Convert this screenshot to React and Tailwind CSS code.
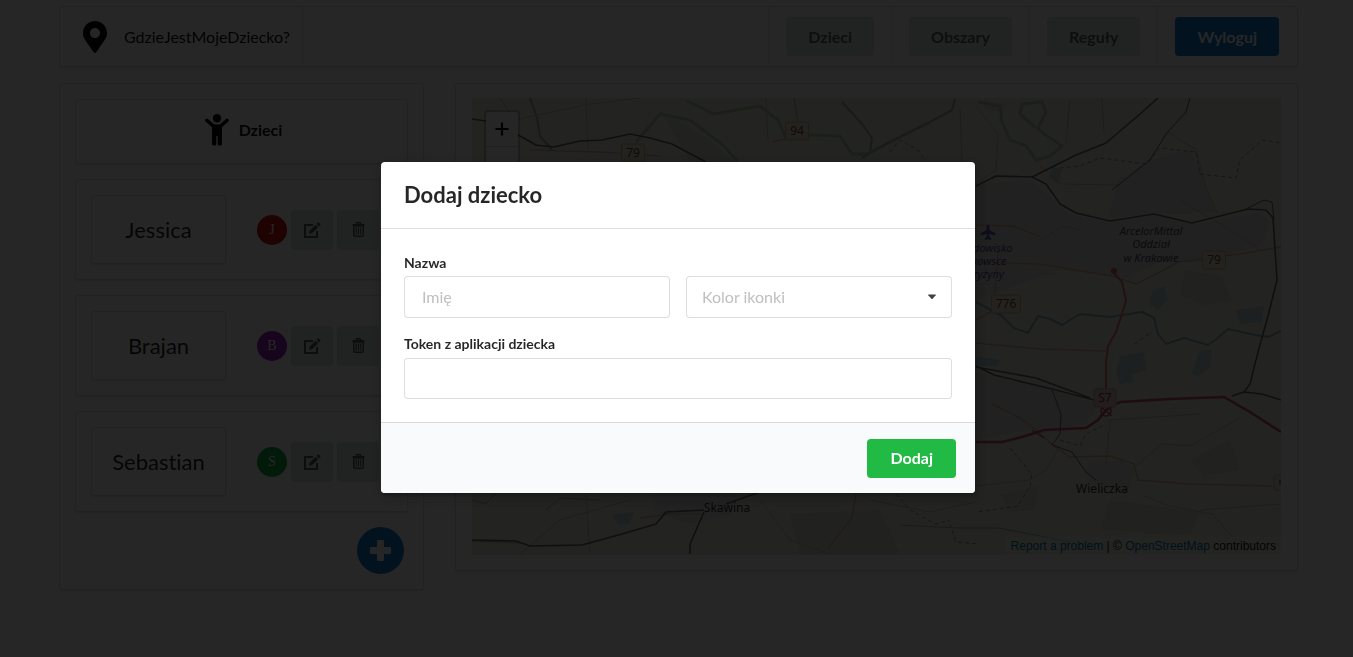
import React from "react";
import { FaMapMarkerAlt } from "react-icons/fa";

const children = [
  { name: "Jessica", letter: "J", color: "bg-[#d01414]" },
  { name: "Brajan", letter: "B", color: "bg-[#9324bc]" },
  { name: "Sebastian", letter: "S", color: "bg-[#0cb03c]" },
];

const navItems = ["Dzieci", "Obszary", "Reguły"];

const segment = "rounded border border-[#222426]/15 bg-white shadow-[0_1px_2px_0_rgba(34,36,38,0.15)]";
const greyButton = "rounded bg-[#dce4e0] text-black/60";
const field =
  "w-full rounded border border-[#222426]/15 bg-white px-[17px] pb-0.5 text-base text-black/85 placeholder:text-[#bfbfbf] focus:outline-none focus:border-[#85b7d9]";

function ChildIcon() {
  return (
    <svg viewBox="0 0 24 32" className="h-8 w-6" aria-hidden="true">
      <circle cx="12" cy="4.2" r="4.200" fill="currentColor" />
      <path d="M2 6.500 L8.500 12.200 H15.500 L22 6.500" fill="none" stroke="currentColor" strokeWidth="3.600" strokeLinecap="round" strokeLinejoin="round" />
      <path d="M7 11 H17 V30 Q17 31.500 15.500 31.500 H14.200 Q12.700 31.500 12.700 30 V22 H11.300 V30 Q11.300 31.500 9.800 31.500 H8.500 Q7 31.500 7 30Z" fill="currentColor" />
    </svg>
  );
}

function EditIcon() {
  return (
    <svg viewBox="0 0 17 16" className="h-4 w-[17px]" aria-hidden="true">
      <path d="M9 3 H1 V15 H13 V9" fill="none" stroke="currentColor" strokeWidth="2" />
      <path d="M5 11.800 L5.500 8.800 L11.700 2.700 L14.200 5.200 L8 11.300Z" fill="currentColor" />
      <path d="M12.500 1.900 L13.800 0.600 Q14.300 0.200 14.800 0.600 L16.300 2.100 Q16.700 2.600 16.300 3.100 L15 4.400Z" fill="currentColor" />
    </svg>
  );
}

function TrashIcon() {
  return (
    <svg viewBox="0 0 13 15" className="h-[15px] w-[13px]" aria-hidden="true">
      <path d="M0.500 2.800 H12.500 M4.200 2 L4.800 0.700 H8.200 L8.800 2" fill="none" stroke="currentColor" strokeWidth="1.500" />
      <path d="M1.800 4 V13 Q1.800 14.200 3 14.200 H10 Q11.200 14.200 11.200 13 V4Z" fill="none" stroke="currentColor" strokeWidth="1.500" />
      <path d="M4.300 5.500 V12.500 M6.500 5.500 V12.500 M8.700 5.500 V12.500" stroke="currentColor" strokeWidth="1.200" />
    </svg>
  );
}

function TopMenu() {
  return (
    <nav className={`flex h-[61px] items-stretch ${segment}`}>
      <a href="#" className="flex items-center gap-[15px] border-r border-[#222426]/10 pl-[21px] pr-3 text-base text-black/95">
        <FaMapMarkerAlt className="h-8 w-7" />
        GdzieJestMojeDziecko?
      </a>
      <div className="ml-auto flex items-stretch">
        {navItems.map((label) => (
          <div key={label} className="flex items-center border-l border-[#222426]/10 px-[17px]">
            <button className={`h-[39px] px-[22px] text-base font-bold ${greyButton}`}>{label}</button>
          </div>
        ))}
        <div className="flex items-center border-l border-[#222426]/10 pl-[17px] pr-[18px]">
          <button className="h-[39px] rounded bg-[#127bca] px-[22px] text-base font-bold text-white">Wyloguj</button>
        </div>
      </div>
    </nav>
  );
}

function ChildRow({ name, letter, color }) {
  return (
    <li className={`flex items-center p-[15px] ${segment}`}>
      <div className={`flex h-[69px] w-[135px] items-center justify-center pb-px text-[22px] text-black/85 ${segment}`}>
        {name}
      </div>
      <span className={`ml-[31px] flex size-[30px] items-center justify-center rounded-full font-['Liberation_Serif',serif] text-sm text-white ${color}`}>
        {letter}
      </span>
      <button aria-label={`Edytuj ${name}`} className={`ml-1 flex h-10 w-[42px] items-center justify-center ${greyButton}`}>
        <EditIcon />
      </button>
      <button aria-label={`Usuń ${name}`} className={`ml-1 flex h-10 w-[42px] items-center justify-center ${greyButton}`}>
        <TrashIcon />
      </button>
    </li>
  );
}

function ChildrenPanel() {
  return (
    <section className={`w-[365px] shrink-0 p-[15px] ${segment}`}>
      <h2 className={`flex h-[65px] items-center justify-center gap-2.5 pb-1 pl-1 text-base font-bold text-black/95 ${segment}`}>
        <ChildIcon />
        Dzieci
      </h2>
      <ul className="mt-[15px] flex flex-col gap-[15px]">
        {children.map((child) => (
          <ChildRow key={child.name} {...child} />
        ))}
      </ul>
      <div className="mt-[15px] flex justify-end pr-1">
        <button aria-label="Dodaj dziecko" className="flex size-[47px] items-center justify-center rounded-full bg-[#127bca] text-white">
          <svg viewBox="0 0 21 21" className="size-[21px]" aria-hidden="true">
            <path d="M8.3 0h4.4q1.3 0 1.3 1.3V7h5.7q1.3 0 1.3 1.3v4.4q0 1.3-1.3 1.3H14v5.7q0 1.3-1.3 1.3H8.3Q7 21 7 19.7V14H1.3Q0 14 0 12.700V8.300Q0 7 1.3 7H7V1.3Q7 0 8.3 0Z" fill="currentColor" />
          </svg>
        </button>
      </div>
    </section>
  );
}

function Shield({ x, y, w = 23, label, fill = "#f2e4cb", stroke = "#d0b48e", color = "#5f4c36" }) {
  return (
    <g>
      <rect x={x - w / 2} y={y - 9} width={w} height="18" rx="2" fill={fill} stroke={stroke} strokeWidth="1" />
      <text x={x} y={y + 4} textAnchor="middle" fontSize="12" fill={color}>
        {label}
      </text>
    </g>
  );
}

function MapDrawing() {
  return (
    <svg
      viewBox="472 98 809 457"
      preserveAspectRatio="xMidYMid slice"
      className="absolute inset-0 size-full font-['Noto_Sans',sans-serif]"
      role="img"
      aria-label="Mapa okolic Krakowa"
    >
      <rect x="472" y="98" width="809" height="457" fill="#e9eade" />
      <g fill="#dddddb">
        <path d="M976 184 L1032 180 L1068 214 L1108 222 L1150 214 L1196 224 L1260 212 L1270 222 L1262 245 L1206 262 L1160 262 L1125 278 L1060 270 L976 300Z" />
        <path d="M976 372 L1052 390 L1098 404 L1086 424 L1060 430 L1030 430 L976 440Z" />
        <path d="M1086 464 L1122 460 L1136 470 L1126 494 L1090 482Z" />
        <path d="M1118 180 L1150 160 L1190 150 L1200 170 L1216 212 L1150 214 L1108 218Z" />
        <path d="M650 494 L740 494 L730 515 L690 524 L655 512Z" />
      </g>
      <g fill="#dbe2d0">
        <path d="M1185 270 L1222 276 L1232 300 L1206 306 L1180 295Z" />
        <path d="M1000 494 L1040 486 L1034 510 L1010 512Z" />
        <path d="M980 100 L1006 104 L1002 112 L985 108Z" />
        <path d="M1190 460 L1230 440 L1240 470 L1204 476Z" />
        <path d="M1110 500 L1200 512 L1190 535 L1100 530Z" />
        <path d="M660 110 L710 140 L735 162 L690 162Z" />
        <path d="M790 514 L880 510 L900 554 L800 554Z" />
      </g>
      <g fill="#bfd3d6">
        <path d="M1152 292 L1164 286 L1168 300 L1158 310 L1150 305Z" />
        <path d="M1236 310 L1264 306 L1262 322 L1240 324Z" />
        <path d="M1120 356 L1144 352 L1146 370 L1132 374 L1134 382 L1120 384 L1116 372Z" />
        <path d="M1200 350 L1212 350 L1210 368 L1198 376 L1192 374Z" />
        <path d="M976 356 L1000 360 L998 366 L976 366Z" />
        <path d="M1052 166 L1062 170 L1058 184 L1050 178Z" />
        <path d="M612 515 L634 512 L630 524 L618 524Z" />
      </g>
      <g fill="none" stroke="#b7cfa8" strokeWidth="3" strokeLinejoin="round">
        <path d="M687 101 L714 114 L760 106 L778 120 L786 138 L812 135 L840 136 L852 154 L868 154 L890 142" />
        <path d="M636 142 L660 114 L690 120 L724 146 L738 162" />
        <path d="M978 102 L1000 106 L1002 122 L1010 140 L1026 146 L1036 160 L1050 156 L1062 146 L1044 134 L1038 128 L1046 112 L1042 102 L1022 104 L1020 114 L1036 128" />
      </g>
      <g fill="none" stroke="#9bb3a8" strokeWidth="2">
        <path d="M862 158 L882 146 L906 134 L930 122 L952 110 L955 99" />
        <path d="M842 102 L862 124 L872 138 L870 152" />
        <path d="M530 98 L537 118 L540 136 L552 150" />
      </g>
      <g fill="none" stroke="#8fb7c4" strokeWidth="2" strokeLinejoin="round">
        <path d="M976 302 L1002 316 L1014 328 L1028 333 L1038 316 L1050 319 L1062 325 L1080 314 L1110 317 L1142 312 L1154 318 L1158 334 L1166 344 L1184 338 L1208 345 L1218 338 L1228 329 L1250 334 L1268 337 L1281 331" />
        <path d="M472 500 L486 504 L495 494 M546 510 L560 498 L600 500" strokeWidth="1" />
        <path d="M900 525 L960 528 L998 528 L1040 536 L1070 542" strokeWidth="1" />
      </g>
      <g fill="none" stroke="#cbc0ae" strokeWidth="1">
        <path d="M976 184 L996 170 L998 134 L976 106 M1066 142 L1070 100 M1104 134 L1102 98" />
        <path d="M1168 132 L1196 150 L1206 188 L1218 214 M1260 250 L1230 230 L1180 200" />
        <path d="M1040 166 L1062 184 L1118 185 M1042 240 L1062 226 L1080 230" />
        <path d="M1136 466 L1162 444 L1190 446 L1240 418 M1144 496 L1170 506 L1212 514 L1232 536" />
        <path d="M976 486 L1030 480 L1046 470 L1060 446 M1106 464 L1110 420 L1200 414 M1200 510 L1281 504" />
        <path d="M500 98 L514 120 L590 104 L640 98 M586 98 L588 150 M766 98 L768 140 M960 108 L962 162" />
        <path d="M520 554 L560 520 L630 500 M760 500 L790 540 L830 554 M586 494 L590 554 M870 500 L930 512 L976 502" />
      </g>
      <g fill="none" stroke="#938f9c" strokeWidth="1" strokeDasharray="4 3">
        <path d="M1060 168 L1080 166 L1100 158 L1146 164 L1160 148 L1196 152 L1200 174 L1236 178 L1240 160 L1262 140 L1281 143" />
        <path d="M1010 448 L1032 474 L1030 486 L1018 506 L976 512 M1060 440 L1080 446 L1086 434 L1106 424" />
        <path d="M896 494 L910 510 L935 524 L950 520 M950 524 L956 542 L980 544 M890 152 L900 140 L918 150 L926 162" />
        <path d="M1134 344 L1152 332" />
      </g>
      <g fill="none" stroke="#dfb596" strokeWidth="1.5">
        <path d="M976 225 L1012 226 L1040 236 M976 262 L1040 264 L1100 274 L1112 276" />
        <path d="M1112 276 L1136 284 L1160 272 L1178 262 L1240 254 L1281 247" />
        <path d="M976 343 L1040 349 L1106 351 M992 404 L1020 418 L1036 430 L1054 446 L1070 457 L1110 456 L1134 464 L1138 480 L1190 484 L1272 486" />
        <path d="M472 541 L520 543 M640 518 L670 514 L700 514 M856 494 L852 518 L828 548 M772 142 L800 136 L794 98 M530 150 L600 152 L660 156" />
        <path d="M976 320 L994 310 L998 250" />
      </g>
      <path d="M1112 271 L1122 282 L1126 300 L1122 314 L1116 332 L1108 346 L1106 362 L1106 390" fill="none" stroke="#d97c70" strokeWidth="2" strokeLinejoin="round" />
      <circle cx="1114" cy="271" r="3" fill="#cc6456" />
      <path d="M976 442 L1002 442 L1022 437 L1044 430 L1086 428 L1098 420 L1106 410 L1120 402 L1170 399 L1224 397 L1250 412 L1281 432" fill="none" stroke="#c9506c" strokeWidth="2.5" strokeLinejoin="round" />
      <g fill="none" stroke="#c9506c" strokeWidth="1.5">
        <circle cx="1106" cy="411" r="5" />
        <path d="M1100 406 L1112 416 M1112 406 L1100 416 M1032 430 L1044 438" />
      </g>
      <g fill="none" stroke="#69696b" strokeWidth="1.6" strokeLinejoin="round">
        <path d="M472 119 L486 121 L520 136 L536 145 L554 147 L580 141 L602 140 L630 134 L650 138 L672 144 L706 162" />
        <path d="M976 186 L996 176 L1032 177 L1050 168 L1076 155 L1106 143 L1140 114 L1158 98" />
        <path d="M1032 177 L1046 184 L1060 204 L1076 213 L1110 221 L1154 214 L1192 223 L1248 209 L1266 210 L1273 218 L1277 280 L1268 316 L1258 352 L1250 384 L1244 392 L1232 396 M1244 392 L1262 394 L1281 400" />
        <path d="M1246 209 L1264 200 L1272 202 L1274 220" strokeWidth="1" />
        <path d="M976 366 L994 375 L1052 389 L1094 400 M976 367 L1036 378 L1090 398" />
        <path d="M1052 390 L1061 414 L1060 434 L1052 445 L1072 452 L1086 472 L1096 480" strokeWidth="1" />
        <path d="M472 540 L516 541 L530 546 L582 545 L622 534 L656 524 L666 512 L704 510 M726 504 L760 492 M704 512 L690 544 L690 554" />
        <path d="M1112 190 L1150 160 L1166 134 L1186 112 L1190 98" strokeWidth="1" />
      </g>
      <path d="M987 225.500 Q988 224 989 225.500 L989.200 230 L995 233.500 L995 235 L989.200 233.500 L989 237 L991 238.500 L991 239.500 L988 239 L985 239.500 L985 238.500 L987 237 L986.800 233.500 L981 235 L981 233.500 L986.800 230Z" fill="#5050b0" stroke="#5050b0" strokeWidth="0.600" />
      <g fontSize="11" fontStyle="italic" textAnchor="middle">
        <g fill="#5050a0">
          <text x="987" y="252">Lądowisko</text>
          <text x="983" y="265">Rakowsce</text>
          <text x="985" y="278">Czyżyny</text>
        </g>
        <g fill="#4c4a60">
          <text x="1151" y="235">ArcelorMittal</text>
          <text x="1151" y="248">Oddział</text>
          <text x="1151" y="262">w Krakowie</text>
        </g>
      </g>
      <g fontSize="12" fill="#333333" textAnchor="middle">
        <text x="1102" y="493">Wieliczka</text>
        <text x="727" y="512">Skawina</text>
      </g>
      <Shield x={797} y={131} label="94" />
      <Shield x={633} y={153} label="79" />
      <Shield x={1214} y={260} label="79" />
      <Shield x={1006} y={304} w={29} label="776" />
      <Shield x={1105} y={398} w={22} label="S7" fill="#ecc8ca" stroke="#d49aa4" color="#8e2c44" />
      <path d="M1281 475 H1276 Q1274 475 1274 477 V488 Q1274 490 1276 490 H1281" fill="#f2e4cb" stroke="#d0b48e" strokeWidth="1" />
      <path d="M1280 480 V485" stroke="#5f4c36" strokeWidth="1" />
    </svg>
  );
}

function MapPanel() {
  return (
    <section className={`min-w-0 flex-1 self-start px-4 pb-[15px] pt-[14px] ${segment}`}>
      <div className="relative h-[457px] overflow-hidden">
        <MapDrawing />
        <div className="absolute left-3 top-3 flex flex-col rounded border-2 border-black/20 bg-white bg-clip-padding text-black">
          <button aria-label="Przybliż" className="flex h-[35px] w-8 items-center justify-center border-b border-[#cccccc]">
            <svg viewBox="0 0 14 14" className="size-[14px]" aria-hidden="true">
              <path d="M7 0.500V13.500M0.500 7H13.500" stroke="currentColor" strokeWidth="2.200" />
            </svg>
          </button>
          <button aria-label="Oddal" className="flex h-[34px] w-8 items-center justify-center">
            <svg viewBox="0 0 14 14" className="size-[14px]" aria-hidden="true">
              <path d="M0.500 7H13.500" stroke="currentColor" strokeWidth="2.200" />
            </svg>
          </button>
        </div>
        <p className="absolute bottom-0 right-0 bg-white/30 px-[5px] font-['Liberation_Sans',sans-serif] text-xs leading-[18px] text-[#222222]">
          <a href="#" className="text-[#0078a8]">Report a problem</a> | © <a href="#" className="text-[#0078a8]">OpenStreetMap</a> contributors
        </p>
      </div>
    </section>
  );
}

function AddChildDialog() {
  return (
    <div className="fixed inset-0 flex items-center justify-center bg-black/85 pb-0.5 pl-[3px]">
      <form
        role="dialog"
        aria-modal="true"
        aria-labelledby="dialog-title"
        onSubmit={(event) => event.preventDefault()}
        className="w-[594px] overflow-hidden rounded bg-white shadow-[1px_3px_3px_0_rgba(0,0,0,0.2),1px_3px_15px_2px_rgba(0,0,0,0.2)]"
      >
        <h1 id="dialog-title" className="border-b border-[#222426]/15 px-[23px] py-[18px] text-[22px] font-bold leading-[30px] text-black/85">
          Dodaj dziecko
        </h1>
        <div className="px-[23px] pb-[23px] pt-6">
          <label htmlFor="child-name" className="block text-sm font-bold leading-5 text-black/85">
            Nazwa
          </label>
          <div className="mt-[3px] grid grid-cols-2 gap-4">
            <input id="child-name" type="text" placeholder="Imię" className={`h-[42px] ${field}`} />
            <div className="relative">
              <select
                aria-label="Kolor ikonki"
                defaultValue=""
                className="h-[42px] w-full appearance-none rounded border border-[#222426]/15 bg-white px-[15px] text-base text-[#bfbfbf] focus:outline-none"
              >
                <option value="" disabled>Kolor ikonki</option>
                <option value="red">Czerwony</option>
                <option value="purple">Fioletowy</option>
                <option value="green">Zielony</option>
              </select>
              <svg viewBox="0 0 10 6" className="pointer-events-none absolute right-[15px] top-[18px] h-[6px] w-[10px]" aria-hidden="true">
                <path d="M1.6 0.500 H8.400 Q9.200 0.600 8.700 1.300 L5.600 4.800 Q5 5.300 4.400 4.800 L1.300 1.300 Q0.800 0.600 1.600 0.500Z" fill="#404040" />
              </svg>
            </div>
          </div>
          <label htmlFor="child-token" className="mt-4 block text-sm font-bold leading-5 text-black/85">
            Token z aplikacji dziecka
          </label>
          <input id="child-token" type="text" className={`mt-1 block h-[41px] ${field}`} />
        </div>
        <div className="flex justify-end border-t border-[#222426]/15 bg-[#f9fafb] pb-[15px] pl-4 pr-[19px] pt-4">
          <button type="submit" className="h-[39px] rounded bg-[#21ba45] px-[23px] pb-0.5 text-base font-bold text-white">
            Dodaj
          </button>
        </div>
      </form>
    </div>
  );
}

export default function App() {
  return (
    <div className="min-h-screen bg-white pl-1 font-['Lato',sans-serif] [font-variant-ligatures:none]">
      <div className="px-[55px] pt-1.5">
        <TopMenu />
        <main className="mt-4 flex items-start gap-[31px]">
          <ChildrenPanel />
          <MapPanel />
        </main>
      </div>
      <AddChildDialog />
    </div>
  );
}
